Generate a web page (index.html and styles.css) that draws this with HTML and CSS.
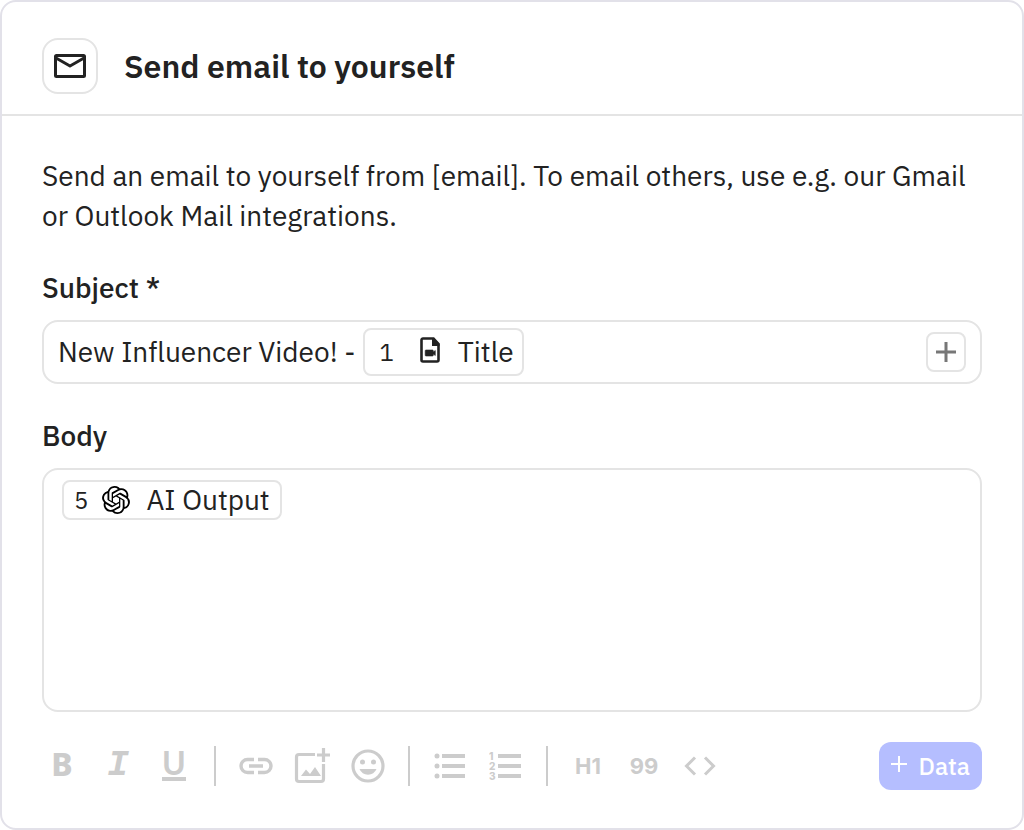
FILE: index.html
```html
<!DOCTYPE html>
<html lang="en">
<head>
    <meta charset="UTF-8">
    <meta name="viewport" content="width=device-width, initial-scale=1.0">
    <title>Send email to yourself</title>
    <link rel="stylesheet" href="styles.css">
</head>
<body>
    <form class="card">
        <header class="card-header">
            <div class="header-icon">
                <svg width="32" height="24" viewBox="0 0 32 24" fill="none" stroke="currentColor" stroke-width="3" stroke-linejoin="round">
                    <rect x="1.5" y="1.5" width="29" height="21" rx="1"/>
                    <path d="M2 4l14 8 14-8"/>
                </svg>
            </div>
            <h1>Send email to yourself</h1>
        </header>

        <main class="card-body">
            <p class="description">Send an email to yourself from [email]. To email others, use e.g. our Gmail or Outlook Mail integrations.</p>

            <label class="field-label" for="subject">Subject *</label>
            <div class="subject-field">
                <input type="text" id="subject" value="New Influencer Video! -" required>
                <span class="chip chip-large">
                    <span class="chip-step">1</span>
                    <svg width="20" height="30" viewBox="0 0 20 30">
                        <path d="M3 1.500h10.500L18.500 7v16a1.500 1.500 0 0 1-1.500 1.500H3A1.500 1.500 0 0 1 1.500 23V3A1.500 1.500 0 0 1 3 1.500z" fill="none" stroke="currentColor" stroke-width="2.600"/>
                        <path d="M12 1v8h7.500V7L13.500 1z" fill="currentColor"/>
                        <path d="M6 13h6.500a.8.8 0 0 1 .8.8V15l2-1.500v5l-2-1.500v1.200a.8.8 0 0 1-.8.8H6a.8.8 0 0 1-.8-.8v-4.400A.8.8 0 0 1 6 13z" fill="currentColor" stroke="currentColor" stroke-width=".6"/>
                    </svg>
                    <span>Title</span>
                </span>
                <button type="button" class="add-button" aria-label="Insert data">
                    <svg width="20" height="20" viewBox="0 0 20 20" stroke="currentColor" stroke-width="3">
                        <path d="M10 0v20M0 10h20"/>
                    </svg>
                </button>
            </div>

            <label class="field-label" for="body">Body</label>
            <div class="body-field">
                <span class="chip">
                    <span class="chip-step">5</span>
                    <svg class="ai-icon" width="28" height="28" viewBox="0 0 24 24" fill="currentColor">
                        <path d="M22.2819 9.8211a5.9847 5.9847 0 0 0-.5157-4.9108 6.0462 6.0462 0 0 0-6.5098-2.9A6.0651 6.0651 0 0 0 4.9807 4.1818a5.9847 5.9847 0 0 0-3.9977 2.9 6.0462 6.0462 0 0 0 .7427 7.0966 5.98 5.98 0 0 0 .511 4.9107 6.051 6.051 0 0 0 6.5146 2.9001A5.9847 5.9847 0 0 0 13.2599 24a6.0557 6.0557 0 0 0 5.7718-4.2058 5.9894 5.9894 0 0 0 3.9977-2.9001 6.0557 6.0557 0 0 0-.7475-7.0729zm-9.022 12.6081a4.4755 4.4755 0 0 1-2.8764-1.0408l.1419-.0804 4.7783-2.7582a.7948.7948 0 0 0 .3927-.6813v-6.7369l2.02 1.1686a.071.071 0 0 1 .038.052v5.5826a4.504 4.504 0 0 1-4.4945 4.4944zm-9.6607-4.1254a4.4708 4.4708 0 0 1-.5346-3.0137l.142.0852 4.783 2.7582a.7712.7712 0 0 0 .7806 0l5.8428-3.3685v2.3324a.0804.0804 0 0 1-.0332.0615L9.74 19.9502a4.4992 4.4992 0 0 1-6.1408-1.6464zM2.3408 7.8956a4.485 4.485 0 0 1 2.3655-1.9728V11.6a.7664.7664 0 0 0 .3879.6765l5.8144 3.3543-2.0201 1.1685a.0757.0757 0 0 1-.071 0l-4.8303-2.7865A4.504 4.504 0 0 1 2.3408 7.872zm16.5963 3.8558L13.1038 8.364 15.1192 7.2a.0757.0757 0 0 1 .071 0l4.8303 2.7913a4.4944 4.4944 0 0 1-.6765 8.1042v-5.6772a.79.79 0 0 0-.407-.667zm2.0107-3.0231l-.142-.0852-4.7735-2.7818a.7759.7759 0 0 0-.7854 0L9.409 9.2297V6.8974a.0662.0662 0 0 1 .0284-.0615l4.8303-2.7866a4.4992 4.4992 0 0 1 6.6802 4.66zM8.3065 12.863l-2.02-1.1638a.0804.0804 0 0 1-.038-.0567V6.0742a4.4992 4.4992 0 0 1 7.3757-3.4537l-.142.0805L8.704 5.459a.7948.7948 0 0 0-.3927.6813zm1.0976-2.3654l2.602-1.4998 2.6069 1.4998v2.9994l-2.5974 1.4997-2.6067-1.4997Z"/>
                    </svg>
                    <span>AI Output</span>
                </span>
                <textarea id="body"></textarea>
            </div>

            <div class="toolbar">
                <button type="button" class="tool tool-bold" aria-label="Bold">B</button>
                <button type="button" class="tool tool-italic" aria-label="Italic">I</button>
                <button type="button" class="tool tool-underline" aria-label="Underline"><span>U</span></button>
                <span class="divider"></span>
                <button type="button" class="tool" aria-label="Link">
                    <svg width="34" height="18" viewBox="0 0 34 18" fill="none" stroke="currentColor" stroke-width="3.400">
                        <path d="M15 2.500H8.500a6.500 6.500 0 0 0 0 13H15M19 2.500h6.500a6.500 6.500 0 0 1 0 13H19M10 9h14"/>
                    </svg>
                </button>
                <button type="button" class="tool" aria-label="Add image">
                    <svg width="36" height="36" viewBox="0 0 36 36">
                        <path d="M21 6.500H5A2.500 2.500 0 0 0 2.500 9v22A2.500 2.500 0 0 0 5 33.500h22a2.500 2.500 0 0 0 2.500-2.500V16M29.500 0v14M23 7h13" fill="none" stroke="currentColor" stroke-width="3.200"/>
                        <path d="M7 28l5-6.500 4 4.500 5-7 6 9z" fill="currentColor"/>
                    </svg>
                </button>
                <button type="button" class="tool" aria-label="Emoji">
                    <svg width="34" height="34" viewBox="0 0 34 34">
                        <circle cx="17" cy="17" r="15" fill="none" stroke="currentColor" stroke-width="3.200"/>
                        <circle cx="11.500" cy="13" r="2.500" fill="currentColor"/>
                        <circle cx="22.500" cy="13" r="2.500" fill="currentColor"/>
                        <path d="M8.500 20h17a9.200 9.200 0 0 1-17 0z" fill="currentColor"/>
                    </svg>
                </button>
                <span class="divider"></span>
                <button type="button" class="tool" aria-label="Bulleted list">
                    <svg width="32" height="26" viewBox="0 0 32 26" fill="currentColor">
                        <circle cx="3" cy="3" r="2.500"/>
                        <circle cx="3" cy="13" r="2.500"/>
                        <circle cx="3" cy="23" r="2.500"/>
                        <path d="M8 1h23v4H8zM8 11h23v4H8zM8 21h23v4H8z"/>
                    </svg>
                </button>
                <button type="button" class="tool" aria-label="Numbered list">
                    <svg class="numbers" width="34" height="38" viewBox="0 0 34 38" fill="currentColor">
                        <text x="0" y="13">1</text>
                        <text x="0" y="23">2</text>
                        <text x="0" y="33">3</text>
                        <path d="M9 7h23v4H9zM9 17h23v4H9zM9 27h23v4H9z"/>
                    </svg>
                </button>
                <span class="divider"></span>
                <button type="button" class="tool tool-text" aria-label="Heading 1">H1</button>
                <button type="button" class="tool tool-text" aria-label="Quote">99</button>
                <button type="button" class="tool" aria-label="Code">
                    <svg width="32" height="20" viewBox="0 0 32 20" fill="none" stroke="currentColor" stroke-width="3">
                        <path d="M11 1.500L2.500 10l8.500 8.500M21 1.500l8.500 8.500-8.500 8.500"/>
                    </svg>
                </button>
                <button type="button" class="data-button">
                    <svg width="16" height="20" viewBox="0 0 16 20" stroke="currentColor" stroke-width="2">
                        <path d="M8 0v16M0 8h16"/>
                    </svg>
                    Data
                </button>
            </div>
        </main>
    </form>
</body>
</html>
```
FILE: styles.css
```css
* {
    box-sizing: border-box;
}
body {
    font-family: "IBM Plex Sans", "Noto Sans", sans-serif;
    font-size: 28px;
    line-height: 40px;
    margin: 0;
    color: #222222;
    background-color: white;
}
button, input, textarea {
    font: inherit;
    color: inherit;
    background: none;
    border: none;
    padding: 0;
    margin: 0;
    outline: none;
}
button {
    display: flex;
    align-items: center;
    justify-content: center;
    flex-shrink: 0;
    cursor: pointer;
}
.card {
    display: flex;
    flex-direction: column;
    min-height: 100vh;
    border: 2px solid #e2e1e9;
    border-radius: 16px;
    overflow: hidden;
}
.card-header {
    display: flex;
    align-items: center;
    gap: 26px;
    padding: 36px 40px 20px;
    border-bottom: 2px solid #e4e4e4;
}
.card-header h1 {
    margin: 0;
    font-size: 32px;
    font-weight: 600;
}
.header-icon {
    display: flex;
    align-items: center;
    justify-content: center;
    width: 56px;
    height: 56px;
    border: 2px solid #e4e4e4;
    border-radius: 16px;
}
.card-body {
    display: flex;
    flex-direction: column;
    flex-grow: 1;
    padding: 40px 40px 38px;
}
.description {
    margin: 0 0 32px;
}
.field-label {
    margin-bottom: 12px;
    font-weight: 500;
}
.subject-field {
    display: flex;
    align-items: center;
    gap: 8px;
    height: 64px;
    margin-bottom: 32px;
    padding: 0 14px;
    border: 2px solid #e4e4e4;
    border-radius: 16px;
}
.subject-field input {
    field-sizing: content;
    min-width: 0;
}
.chip {
    display: flex;
    align-items: center;
    height: 40px;
    gap: 14px;
    padding: 0 10px;
    border: 2px solid #e4e4e4;
    border-radius: 8px;
    white-space: nowrap;
}
.chip-large {
    height: 48px;
    gap: 18px;
    padding: 0 8px 0 14px;
}
.chip-large .chip-step {
    margin-right: 8px;
}
.chip-step {
    font-size: 24px;
}
.ai-icon {
    margin-right: 2px;
    color: black;
}
.add-button {
    width: 40px;
    height: 40px;
    margin-left: auto;
    color: #777777;
    border: 2px solid #e4e4e4;
    border-radius: 8px;
}
.body-field {
    display: flex;
    align-items: flex-start;
    flex-grow: 1;
    gap: 8px;
    min-height: 160px;
    padding: 10px 18px;
    border: 2px solid #e4e4e4;
    border-radius: 16px;
}
.body-field textarea {
    flex-grow: 1;
    align-self: stretch;
    min-width: 0;
    resize: none;
}
.toolbar {
    display: flex;
    align-items: center;
    flex-wrap: wrap;
    gap: 16px;
    margin-top: 30px;
}
.tool {
    width: 40px;
    height: 40px;
    color: #cccccc;
}
.tool-bold {
    padding-bottom: 4px;
    font-family: "Noto Sans", sans-serif;
    font-size: 32px;
    font-weight: 800;
}
.tool-italic {
    font-family: "Liberation Mono", monospace;
    font-size: 36px;
    font-style: italic;
    font-weight: 700;
}
.tool-underline {
    padding-bottom: 2px;
}
.tool-underline span {
    width: 24px;
    font-family: Lato, sans-serif;
    font-size: 32px;
    font-weight: 700;
    line-height: 28px;
    border-bottom: 4px solid #cccccc;
}
.numbers {
    font-family: Inter, sans-serif;
    font-size: 10px;
    font-weight: 800;
}
.tool-text {
    font-family: Inter, sans-serif;
    font-size: 22px;
    font-weight: 700;
}
.divider {
    width: 2px;
    height: 40px;
    margin: 0 4px;
    background-color: #cccccc;
}
.data-button {
    height: 48px;
    gap: 12px;
    margin-left: auto;
    padding: 0 12px;
    font-size: 24px;
    font-weight: 500;
    color: white;
    background-color: #b5beff;
    border-radius: 12px;
}
```
